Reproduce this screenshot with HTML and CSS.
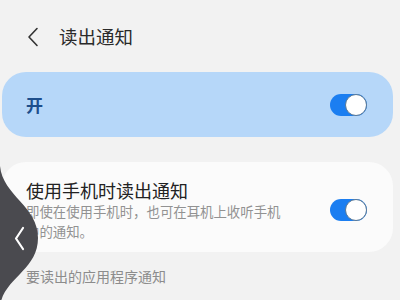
FILE: index.html
```html
<!DOCTYPE html>
<html lang="zh">
<head>
<meta charset="utf-8">
<link rel="stylesheet" href="styles.css">
</head>
<body>
<div class="page">
  <header class="topbar">
    <svg class="back" width="12" height="20" viewBox="0 0 12 20"><path d="M10 1.5 L2 10 L10 18.5" fill="none" stroke="#333" stroke-width="1.6" stroke-linecap="round" stroke-linejoin="round"/></svg>
    <h1 class="title">读出通知</h1>
  </header>

  <section class="card card-on">
    <span class="on-label">开</span>
    <span class="toggle"><span class="knob"></span></span>
  </section>

  <section class="card card-item">
    <div class="item-text">
      <div class="item-title">使用手机时读出通知</div>
      <div class="item-sub">即使在使用手机时，也可在耳机上收听手机中的通知。</div>
    </div>
    <span class="toggle"><span class="knob"></span></span>
  </section>

  <div class="section-head">要读出的应用程序通知</div>

  <div class="gesture">
    <svg width="46" height="140" viewBox="0 0 46 140">
      <path d="M0 0 C3 30 38 40 38 72 C38 104 4 112 0 140 Z" fill="#4a4a4f"/>
      <path d="M23 62 L16 72.5 L23 83" fill="none" stroke="#fff" stroke-width="2.2" stroke-linecap="round" stroke-linejoin="round"/>
    </svg>
  </div>
</div>
</body>
</html>
```

FILE: styles.css
```css
* { box-sizing: border-box; }
html, body { margin: 0; padding: 0; }
body {
  width: 400px;
  height: 300px;
  overflow: hidden;
  background: #f2f2f2;
  font-family: "Noto Sans CJK SC", "Noto Sans", sans-serif;
}
.page {
  position: relative;
  width: 400px;
  height: 300px;
  padding: 0 7px 0 2px;
}
.topbar {
  height: 72px;
  display: flex;
  align-items: center;
  padding-left: 25px;
}
.back { display: block; margin-top: 1px; }
.title {
  margin: 0 0 0 20px;
  font-size: 18.5px;
  font-weight: 400;
  color: #2a2a2a;
  line-height: 24px;
}
.card {
  border-radius: 24px;
  display: flex;
  align-items: center;
  justify-content: space-between;
  padding: 0 26px 0 24px;
}
.card-on {
  height: 65px;
  background: #b6d7f9;
}
.on-label {
  font-size: 17px;
  font-weight: 700;
  color: #1d4e8c;
}
.card-item {
  margin-top: 25px;
  background: #fbfbfb;
  padding-top: 17px;
  padding-bottom: 11px;
}
.item-text { width: 262px; }
.item-title {
  font-size: 18px;
  line-height: 22px;
  color: #222;
}
.item-sub {
  font-size: 13.4px;
  line-height: 20px;
  color: #929292;
}
.toggle {
  position: relative;
  width: 37px;
  height: 22px;
  border-radius: 11px;
  background: #1b7ef1;
  flex: none;
}
.knob {
  position: absolute;
  right: 0;
  top: 0;
  width: 22px;
  height: 22px;
  border-radius: 50%;
  background: #fff;
  border: 1px solid #5a7894;
}
.section-head {
  margin-top: 14px;
  padding-left: 24px;
  font-size: 14px;
  line-height: 20px;
  color: #8c8c8c;
}
.gesture {
  position: absolute;
  left: 0;
  top: 166px;
}
.gesture svg { display: block; }
```
